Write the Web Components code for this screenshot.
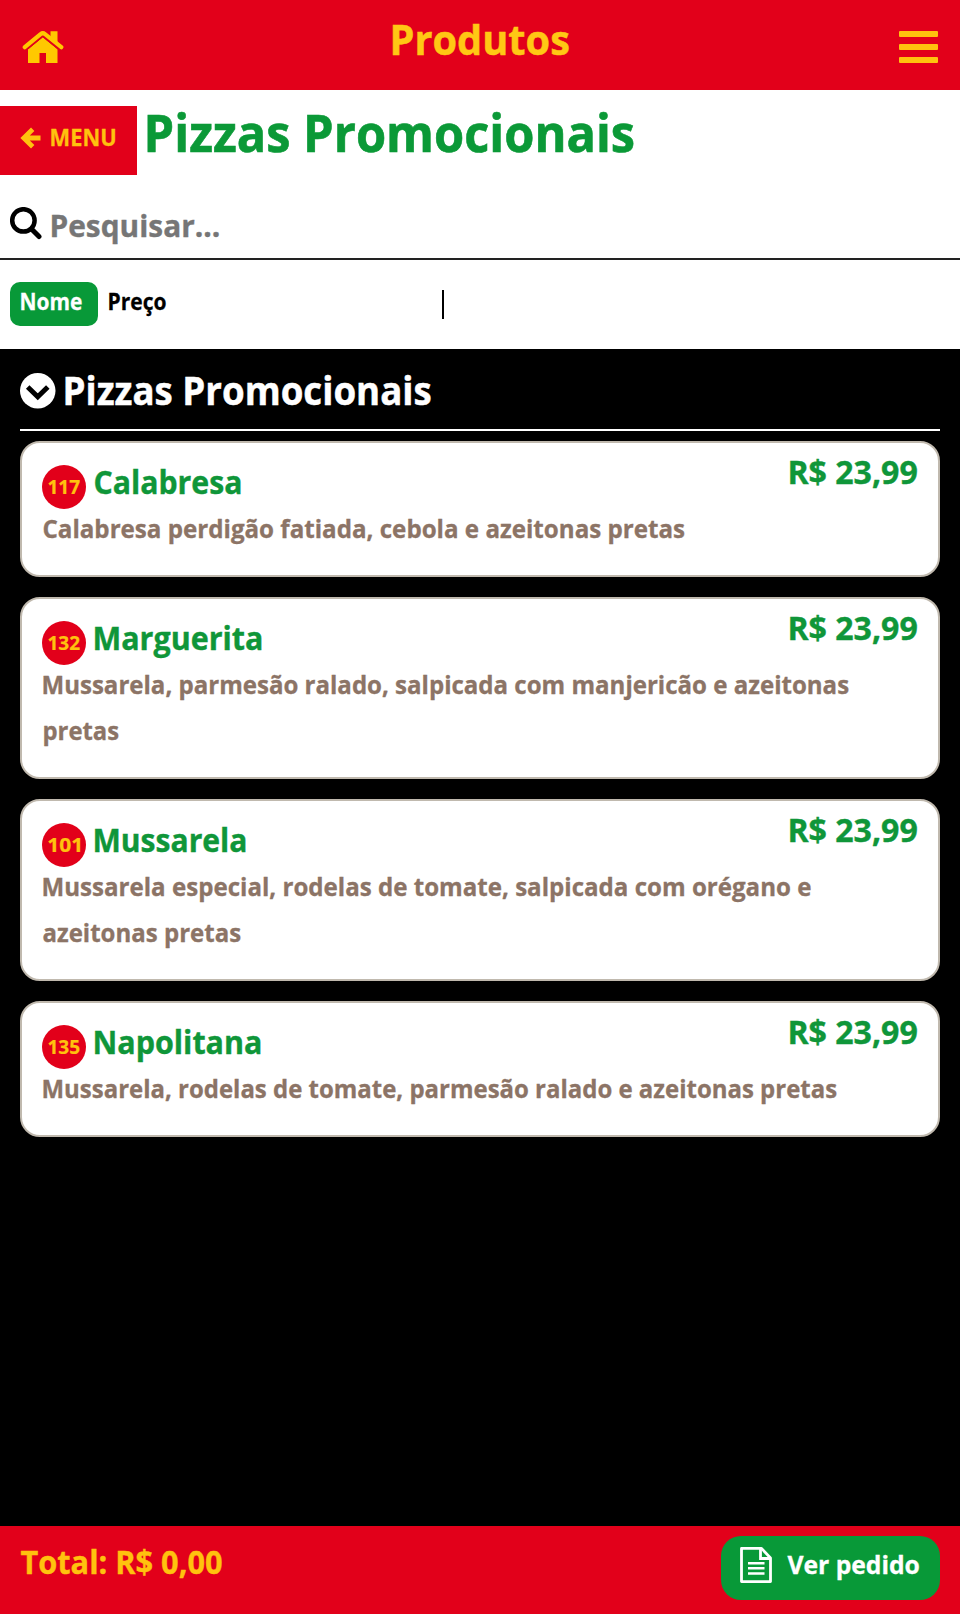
<!DOCTYPE html>
<html lang="pt-BR">
<head>
<meta charset="UTF-8">
<title>Produtos</title>
<style>
  body {
    margin: 0;
    background: #000;
    font-family: 'Open Sans', 'Noto Sans', sans-serif;
    font-weight: 700;
  }
</style>
</head>
<body>
<products-page></products-page>

<script>
// One line of text condensed to a given width
class FitText extends HTMLElement {
  connectedCallback() {
    this.attachShadow({ mode: 'open' });
    this.shadowRoot.innerHTML = `
      <style>
        :host {
          display: block;
          flex: none;
          line-height: 1;
          white-space: nowrap;
          -webkit-text-stroke: 0.012em currentColor;
        }
        span { display: inline-block; vertical-align: top; transform-origin: 0 0; }
      </style>
      <span><slot></slot></span>
    `;
    const width = Number(this.getAttribute('width'));
    this.style.fontSize = this.getAttribute('size') + 'px';
    this.style.width = width + 'px';

    const ctx = document.createElement('canvas').getContext('2d');
    const cs = getComputedStyle(this);
    ctx.font = `${cs.fontWeight} ${cs.fontSize} ${cs.fontFamily}`;
    const m = ctx.measureText(this.textContent);
    const scale = (width - 0.8) / (m.actualBoundingBoxLeft + m.actualBoundingBoxRight);
    const span = this.shadowRoot.querySelector('span');
    span.style.transform = `translateX(${m.actualBoundingBoxLeft * scale + 0.4}px) scaleX(${scale})`;
  }
}
customElements.define('fit-text', FitText);

class AppHeader extends HTMLElement {
  connectedCallback() {
    this.attachShadow({ mode: 'open' });
    this.shadowRoot.innerHTML = `
      <style>
        :host {
          display: grid;
          grid-template-columns: 1fr auto 1fr;
          height: 90px;
          box-sizing: border-box;
          padding: 0 22px;
          background: #e2001a;
          color: #ffc814;
        }
        svg { display: block; margin-top: 30px; }
        .burger { justify-self: end; margin-top: 31px; }
        fit-text { margin-top: 19px; }
      </style>
      <svg width="42" height="34" viewBox="0 0 42 34" fill="#ffc800">
        <path d="M28.5 1.2H35.5V15L28.5 9.5Z"/>
        <path d="M6 19.2 20.8 7.2 35.5 19.2V33H24V23H17.5V33H6Z"/>
        <path d="M5.5 19.4 20.8 6.8 36.3 19.4" fill="none" stroke="#e2001a" stroke-width="1"/>
        <path d="M2.8 17.2 18.6 4.1Q20.8 2.4 23 4.1L39.3 17.2" fill="none" stroke="#ffc800" stroke-width="4.2" stroke-linecap="round" stroke-linejoin="round"/>
      </svg>
      <fit-text width="177" size="41">Produtos</fit-text>
      <svg class="burger" width="39" height="32" viewBox="0 0 39 32" fill="#ffc20e">
        <rect width="39" height="6" rx="1"/>
        <rect y="13" width="39" height="6" rx="1"/>
        <rect y="26" width="39" height="6" rx="1"/>
      </svg>
    `;
  }
}
customElements.define('app-header', AppHeader);

class ProductFilter extends HTMLElement {
  connectedCallback() {
    this.attachShadow({ mode: 'open' });
    this.shadowRoot.innerHTML = `
      <style>
        :host { display: block; background: #fff; height: 259px; box-sizing: border-box; padding-top: 16px; }
        .title { display: flex; gap: 10px; height: 69px; color: #0b9937; }
        .title > fit-text { margin-top: 1px; }
        .menu {
          display: flex;
          gap: 10px;
          width: 137px;
          box-sizing: border-box;
          padding-left: 20px;
          background: #e2001a;
          color: #ffc20e;
        }
        .menu svg { margin-top: 21px; }
        .menu fit-text { margin-top: 20.4px; }
        .search {
          display: flex;
          gap: 9.5px;
          height: 85px;
          box-sizing: border-box;
          padding-left: 10px;
          border-bottom: 2px solid #222;
          color: #767676;
        }
        .search svg { margin-top: 32px; }
        .search fit-text { margin-top: 34.7px; }
        .sort { display: flex; padding: 22px 10px; color: #000; }
        .pill {
          width: 88px;
          height: 44px;
          box-sizing: border-box;
          padding: 9px 0 0 11px;
          margin-right: 11px;
          border-radius: 10px;
          background: #089938;
          color: #fff;
        }
        .sort > fit-text { margin-top: 9px; }
        .bar { width: 2px; height: 29px; margin: 8px 0 0 276px; background: #000; }
      </style>
      <div class="title">
        <div class="menu">
          <svg width="21" height="22" viewBox="0 0 21 22" fill="none" stroke="#ffc20e" stroke-width="4.8">
            <path d="M20.5 11H4M12.7 2.3 3.8 11l8.9 8.7"/>
          </svg>
          <fit-text width="64.5" size="23.4">MENU</fit-text>
        </div>
        <fit-text width="487" size="51.4">Pizzas Promocionais</fit-text>
      </div>
      <div class="search">
        <svg width="31.5" height="33" viewBox="0 0 31.5 33" fill="none" stroke="#000">
          <circle cx="13.4" cy="13.4" r="11.2" stroke-width="4.5"/>
          <path d="M21.5 22 29 29.5" stroke-width="5" stroke-linecap="round"/>
        </svg>
        <fit-text width="168" size="30.7">Pesquisar...</fit-text>
      </div>
      <div class="sort">
        <div class="pill"><fit-text width="61.5" size="22.5">Nome</fit-text></div>
        <fit-text width="57" size="22.5">Preço</fit-text>
        <div class="bar"></div>
      </div>
    `;
  }
}
customElements.define('product-filter', ProductFilter);

class ProductCard extends HTMLElement {
  connectedCallback() {
    this.attachShadow({ mode: 'open' });
    this.shadowRoot.innerHTML = `
      <style>
        :host {
          display: block;
          box-sizing: border-box;
          padding: 0 20.5px 24px 20px;
          border: 2px solid #c0b9ae;
          border-radius: 20px;
          background: #fff;
          color: #0f9639;
        }
        .top { display: flex; height: 62px; }
        .badge {
          display: flex;
          justify-content: center;
          width: 44px;
          height: 44px;
          margin: 22px 7.5px 0 0;
          border-radius: 50%;
          background: #e2001a;
          color: #ffc20e;
        }
        .badge fit-text { margin-top: 12px; }
        .name { margin-top: 24.2px; }
        .price { margin: 13px 0 0 auto; }
        .desc { color: #8c7466; padding-left: 0.5px; }
      </style>
      <div class="top">
        <div class="badge"><fit-text width="32.5" size="19.2">${this.getAttribute('code')}</fit-text></div>
        <fit-text class="name" width="${this.getAttribute('name-width')}" size="31.3">${this.getAttribute('name')}</fit-text>
        <fit-text class="price" width="129" size="31.8">R$ 23,99</fit-text>
      </div>
      <div class="desc"><slot></slot></div>
    `;
  }
}
customElements.define('product-card', ProductCard);

class ProductList extends HTMLElement {
  connectedCallback() {
    this.attachShadow({ mode: 'open' });
    this.shadowRoot.innerHTML = `
      <style>
        :host { display: block; flex: 1; padding: 0 20px; background: #000; color: #fff; }
        .heading {
          display: flex;
          gap: 9.5px;
          height: 82px;
          box-sizing: border-box;
          border-bottom: 2px solid #fff;
        }
        .heading svg { margin-top: 24px; }
        .heading > fit-text { margin-top: 22px; }
        .cards { display: flex; flex-direction: column; gap: 20px; padding-top: 10px; }
        .cards fit-text { line-height: 46px; }
      </style>
      <div class="heading">
        <svg width="35.5" height="35.5" viewBox="0 0 35.5 35.5">
          <circle cx="17.75" cy="17.75" r="17.75" fill="#fff"/>
          <path d="M7.7 14 17.75 23.8 27.8 14" fill="none" stroke="#000" stroke-width="5"/>
        </svg>
        <fit-text width="366" size="38.5">Pizzas Promocionais</fit-text>
      </div>
      <div class="cards">
        <product-card code="117" name="Calabresa" name-width="147">
          <fit-text width="642" size="25.2">Calabresa perdigão fatiada, cebola e azeitonas pretas</fit-text>
        </product-card>
        <product-card code="132" name="Marguerita" name-width="168">
          <fit-text width="806" size="25.2">Mussarela, parmesão ralado, salpicada com manjericão e azeitonas</fit-text>
          <fit-text width="76" size="25.2">pretas</fit-text>
        </product-card>
        <product-card code="101" name="Mussarela" name-width="152">
          <fit-text width="768" size="25.2">Mussarela especial, rodelas de tomate, salpicada com orégano e</fit-text>
          <fit-text width="198" size="25.2">azeitonas pretas</fit-text>
        </product-card>
        <product-card code="135" name="Napolitana" name-width="167">
          <fit-text width="794" size="25.2">Mussarela, rodelas de tomate, parmesão ralado e azeitonas pretas</fit-text>
        </product-card>
      </div>
    `;
  }
}
customElements.define('product-list', ProductList);

class OrderBar extends HTMLElement {
  connectedCallback() {
    this.attachShadow({ mode: 'open' });
    this.shadowRoot.innerHTML = `
      <style>
        :host {
          display: flex;
          justify-content: space-between;
          height: 88px;
          box-sizing: border-box;
          padding: 10px 20px 0;
          background: #e2001a;
          color: #ffc20e;
        }
        .total { margin-top: 10px; }
        .order {
          display: flex;
          gap: 15px;
          width: 219px;
          height: 64px;
          box-sizing: border-box;
          padding-left: 19px;
          border-radius: 20px;
          background: #089938;
          color: #fff;
        }
        .order svg { margin-top: 11px; }
        .order fit-text { margin-top: 16px; }
      </style>
      <fit-text class="total" width="202" size="31.5">Total: R$ 0,00</fit-text>
      <div class="order">
        <svg width="32" height="36" viewBox="0 0 32 36" fill="none" stroke="#fff" stroke-width="2.8">
          <path d="M1.5 1.4H21.5L30.5 11V34.6H1.5Z" stroke-linejoin="round"/>
          <path d="M20.5 1.5V11.5H30.5"/>
          <path d="M8 16.3H24.5M8 21.3H24.5M8 26.5H24.5" stroke-width="2.5"/>
        </svg>
        <fit-text width="132.5" size="25.5">Ver pedido</fit-text>
      </div>
    `;
  }
}
customElements.define('order-bar', OrderBar);

class ProductsPage extends HTMLElement {
  connectedCallback() {
    this.attachShadow({ mode: 'open' });
    this.shadowRoot.innerHTML = `
      <style>
        :host { display: flex; flex-direction: column; min-height: 1614px; }
      </style>
      <app-header></app-header>
      <product-filter></product-filter>
      <product-list></product-list>
      <order-bar></order-bar>
    `;
  }
}
customElements.define('products-page', ProductsPage);
</script>
</body>
</html>
